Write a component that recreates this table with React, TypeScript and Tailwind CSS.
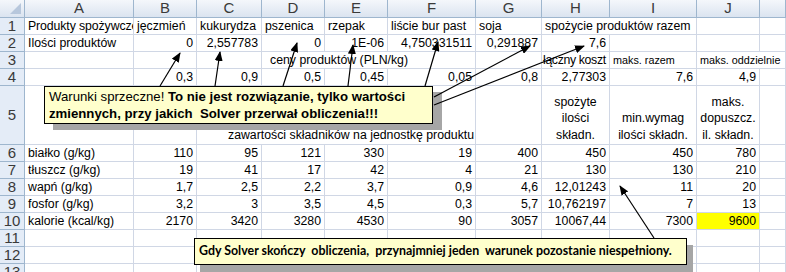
import React from "react";

type Cell = {
  t?: React.ReactNode;
  a?: "l" | "r" | "c";
  span?: number;
  cls?: string;
};

const cols = ["A", "B", "C", "D", "E", "F", "G", "H", "I", "J", ""];

const e = (n: number): Cell[] => Array.from({ length: n }, () => ({}));

const num = (vals: string[]): Cell[] => vals.map((v) => ({ t: v, a: "r" as const }));

const rows: Cell[][] = [
  [
    { t: "Produkty spożywcze", cls: "tracking-[-0.1px]" },
    { t: "jęczmień" },
    { t: "kukurydza" },
    { t: "pszenica" },
    { t: "rzepak" },
    { t: "liście bur past" },
    { t: "soja" },
    { t: "spożycie produktów razem", span: 2 },
    {},
    {},
  ],
  [
    { t: "Ilości produktów" },
    ...num(["0", "2,557783", "0", "1E-06", "4,750331511", "0,291887", "7,6"]),
    ...e(3),
  ],
  [
    {},
    {},
    {},
    { t: "ceny produktów (PLN/kg)", span: 3, cls: "pl-[8px]" },
    {},
    { t: "łączny koszt", cls: "!pl-[1px] !pr-0 tracking-[-0.35px]" },
    { t: "maks. razem", cls: "text-[10.8px]" },
    { t: "maks. oddzielnie", span: 2, cls: "text-[10.8px]" },
  ],
  [
    {},
    ...num(["0,3", "0,9", "0,5", "0,45", "0,05", "0,8", "2,77303", "7,6", "4,9"]),
    {},
  ],
  [
    {},
    {},
    { t: "zawartości składników na jednostkę produktu", span: 4, cls: "pl-[31px] !items-end pb-[1px]" },
    {},
    {
      t: (
        <>
          spożyte
          <br />
          ilości
          <br />
          składn.
        </>
      ),
      a: "c",
    },
    {
      t: (
        <>
          min.wymag
          <br />
          ilości składn.
        </>
      ),
      a: "c",
    },
    {
      t: (
        <>
          maks.
          <br />
          dopuszcz.
          <br />
          il. składn.
        </>
      ),
      a: "c",
    },
    {},
  ],
  [{ t: "białko (g/kg)" }, ...num(["110", "95", "121", "330", "19", "400", "450", "450", "780"]), {}],
  [{ t: "tłuszcz (g/kg)" }, ...num(["19", "41", "17", "42", "4", "21", "130", "130", "210"]), {}],
  [{ t: "wapń (g/kg)" }, ...num(["1,7", "2,5", "2,2", "3,7", "0,9", "4,6", "12,01243", "11", "20"]), {}],
  [{ t: "fosfor (g/kg)" }, ...num(["3,2", "3", "3,5", "4,5", "0,3", "5,7", "10,762197", "7", "13"]), {}],
  [
    { t: "kalorie (kcal/kg)" },
    ...num(["2170", "3420", "3280", "4530", "90", "3057", "10067,44", "7300"]),
    { t: "9600", a: "r", cls: "bg-[#ffff00]" },
    {},
  ],
  e(11),
  e(11),
  e(11),
];

const Arrows = () => (
  <svg className="absolute inset-0 pointer-events-none" width="786" height="272">
    <defs>
      <marker
        id="ah"
        markerWidth="10"
        markerHeight="8"
        refX="9"
        refY="4"
        orient="auto"
        markerUnits="userSpaceOnUse"
      >
        <path d="M0,0 L10,4 L0,8 z" fill="#000" />
      </marker>
    </defs>
    <g stroke="#000" strokeWidth="1.2">
      <line x1="160" y1="86" x2="180" y2="53" markerEnd="url(#ah)" />
      <line x1="215" y1="86" x2="220" y2="52" markerEnd="url(#ah)" />
      <line x1="283" y1="86" x2="297" y2="43" markerEnd="url(#ah)" />
      <line x1="348" y1="86" x2="353" y2="45" markerEnd="url(#ah)" />
      <line x1="425" y1="86" x2="438" y2="42" markerEnd="url(#ah)" />
      <line x1="434" y1="97" x2="530" y2="46" markerEnd="url(#ah)" />
      <line x1="434" y1="105" x2="584" y2="46" markerEnd="url(#ah)" />
      <line x1="654" y1="238" x2="620" y2="186" markerEnd="url(#ah)" />
    </g>
  </svg>
);

export default function App() {
  return (
    <div className="relative w-[786px] h-[272px] overflow-hidden bg-white text-black font-['Liberation_Sans',Arial,sans-serif] text-[12.3px]">
      <div className="grid grid-cols-[25px_109px_63px_65px_63px_63px_88px_66px_68px_87px_63px_26px] grid-rows-[18px_17px_17px_17px_17px_59px_17px_17px_17px_17px_17px_17px_17px_17px]">
        {/* corner */}
        <div className="relative bg-linear-to-b from-[#f4f7fb] to-[#dbe4f0] border-r border-b border-[#9eb6ce]">
          <svg className="absolute right-[3px] bottom-[3px]" width="11" height="11">
            <path d="M11,0 L11,11 L0,11 z" fill="#b7c7dc" />
          </svg>
        </div>
        {cols.map((c, i) => (
          <div
            key={"h" + i}
            className="flex items-center justify-center bg-linear-to-b from-[#f4f7fb] to-[#dbe4f0] border-r border-b border-[#9eb6ce] text-[15px] text-[#3a3a3a]"
          >
            {c}
          </div>
        ))}
        {rows.map((r, ri) => (
          <React.Fragment key={ri}>
            <div className="flex items-center justify-center bg-[#e4ecf7] border-r border-b border-[#9eb6ce] text-[15px] text-[#3a3a3a]">
              {ri + 1}
            </div>
            {r.map((c, ci) => (
              <div
                key={ci}
                style={c.span ? { gridColumn: `span ${c.span}` } : undefined}
                className={
                  "flex whitespace-nowrap overflow-hidden border-r border-b border-[#d0d7e5] px-[3px] leading-[16.5px] " +
                  (c.a === "r"
                    ? "items-center justify-end "
                    : c.a === "c"
                    ? "items-end justify-center text-center pb-[1px] "
                    : "items-center justify-start ") +
                  (c.cls ?? "")
                }
              >
                {c.t}
              </div>
            ))}
          </React.Fragment>
        ))}
      </div>

      {/* callout 1 */}
      <div className="absolute left-[44px] top-[86px] w-[389px] h-[38px] border border-black bg-[#ffffcc] shadow-[9px_6px_0_#a6a6a6] pl-[4px] pt-[1px] text-[13.2px] leading-[17px] whitespace-nowrap">
        Warunki sprzeczne! <b>To nie jest rozwiązanie, tylko wartości</b>
        <br />
        <b>zmiennych, przy jakich&nbsp; Solver przerwał obliczenia!!!</b>
      </div>

      {/* callout 2 */}
      <div className="absolute left-[194px] top-[238px] w-[493px] h-[27px] border border-black bg-[#ffffcc] shadow-[6px_7px_0_#a6a6a6] pl-[4px] flex items-center font-['Lato',sans-serif] font-bold text-[12.4px] whitespace-nowrap">
        Gdy Solver skończy&nbsp; obliczenia,&nbsp; przynajmniej jeden&nbsp; warunek pozostanie niespełniony.
      </div>

      <Arrows />
    </div>
  );
}
